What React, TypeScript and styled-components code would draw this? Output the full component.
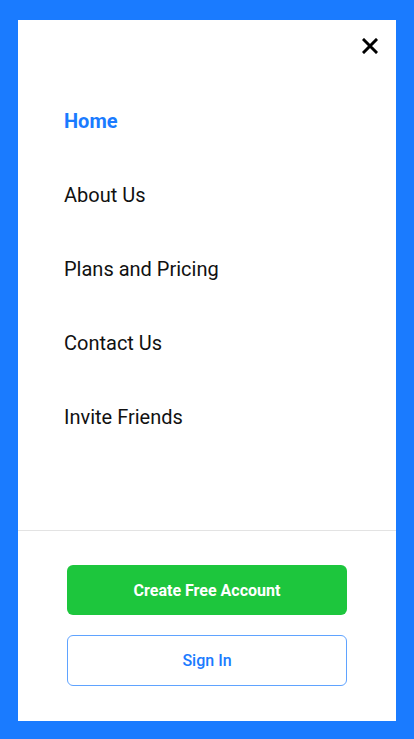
import React from "react";
import styled, { createGlobalStyle } from "styled-components";

const Global = createGlobalStyle`
  html, body { margin: 0; padding: 0; background: #1a7bff; }
  body { font-family: Roboto, "Liberation Sans", sans-serif; }
  * { box-sizing: border-box; }
`;

const Frame = styled.div`
  width: 414px;
  height: 739px;
  padding: 20px 18px 18px 18px;
  background: #1a7bff;
`;

const Panel = styled.div`
  height: 701px;
  background: #ffffff;
  display: flex;
  flex-direction: column;
`;

const Header = styled.div`
  height: 64px;
  display: flex;
  justify-content: flex-end;
  align-items: flex-start;
  padding: 18px 18px 0 0;
`;

const CloseButton = styled.button`
  width: 16px;
  height: 16px;
  padding: 0;
  border: none;
  background: none;
  display: flex;
  align-items: center;
  justify-content: center;
  cursor: pointer;
`;

const Nav = styled.nav`
  display: flex;
  flex-direction: column;
  padding-left: 46px;
`;

const NavItem = styled.a<{ $active?: boolean }>`
  height: 74px;
  display: flex;
  align-items: center;
  font-size: 20px;
  font-weight: ${(p) => (p.$active ? 700 : 400)};
  color: ${(p) => (p.$active ? "#1a7bff" : "#111111")};
  text-decoration: none;
`;

const Spacer = styled.div`
  flex: 1;
`;

const Footer = styled.div`
  border-top: 1px solid #e3e3e3;
  padding: 34px 0 35px;
  display: flex;
  flex-direction: column;
  align-items: center;
  gap: 20px;
`;

const Button = styled.button<{ $variant: "primary" | "outline" }>`
  width: 280px;
  height: ${(p) => (p.$variant === "primary" ? "50px" : "51px")};
  border-radius: 6px;
  font-family: Roboto, "Liberation Sans", sans-serif;
  font-size: 16px;
  font-weight: ${(p) => (p.$variant === "primary" ? 700 : 500)};
  cursor: pointer;
  background: ${(p) => (p.$variant === "primary" ? "#1dc63d" : "#ffffff")};
  color: ${(p) => (p.$variant === "primary" ? "#ffffff" : "#1a7bff")};
  border: ${(p) => (p.$variant === "primary" ? "none" : "1px solid #5fa3ff")};
`;

const items = ["Home", "About Us", "Plans and Pricing", "Contact Us", "Invite Friends"];

export default function App() {
  return (
    <>
      <Global />
      <Frame>
        <Panel>
          <Header>
            <CloseButton aria-label="Close">
              <svg width="16" height="16" viewBox="0 0 16 16">
                <path d="M2 2 L14 14 M14 2 L2 14" stroke="#000" strokeWidth="3" strokeLinecap="square" />
              </svg>
            </CloseButton>
          </Header>
          <Nav>
            {items.map((t, i) => (
              <NavItem key={t} href="#" $active={i === 0}>
                {t}
              </NavItem>
            ))}
          </Nav>
          <Spacer />
          <Footer>
            <Button $variant="primary">Create Free Account</Button>
            <Button $variant="outline">Sign In</Button>
          </Footer>
        </Panel>
      </Frame>
    </>
  );
}
